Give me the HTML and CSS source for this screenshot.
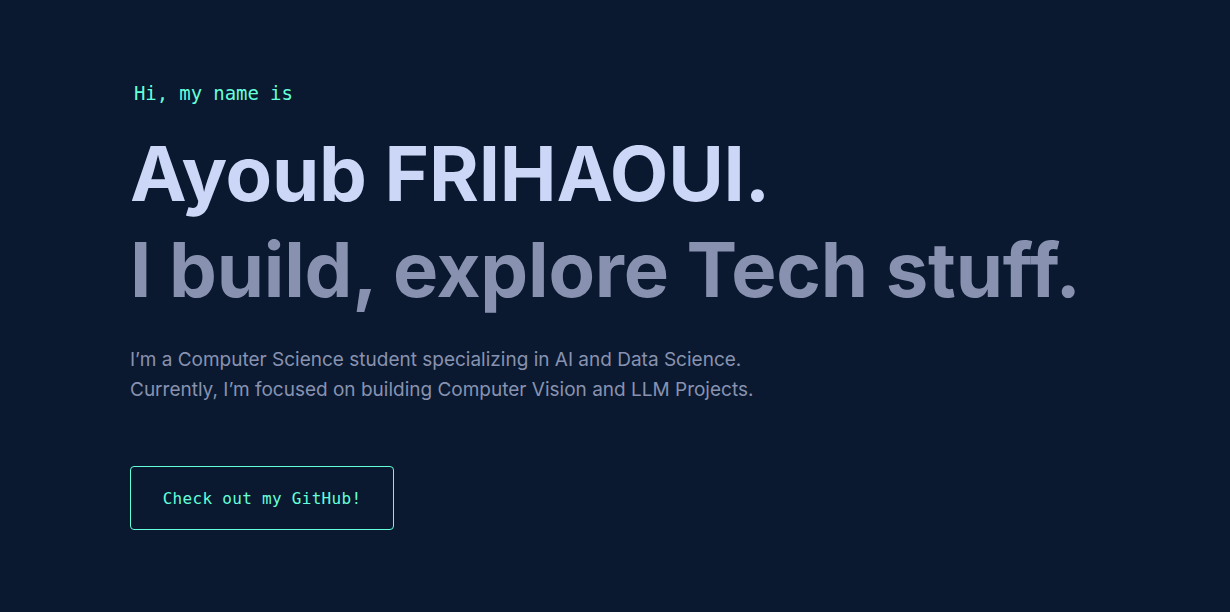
FILE: index.html
```html
<!DOCTYPE html>
<html lang="en">
<head>
<meta charset="utf-8">
<title>Ayoub FRIHAOUI</title>
<link rel="stylesheet" href="styles.css">
</head>
<body>
<main class="hero">
  <h1 class="intro">Hi, my name is</h1>
  <h2 class="big-heading name">Ayoub FRIHAOUI.</h2>
  <h3 class="big-heading tagline">I build, explore Tech stuff.</h3>
  <p class="about">I’m a Computer Science student specializing in AI and Data Science.<br>Currently, I’m focused on building Computer Vision and LLM Projects.</p>
  <a class="cta" href="#">Check out my GitHub!</a>
</main>
</body>
</html>
```
FILE: styles.css
```css
html, body {
  margin: 0;
  padding: 0;
  background: #0a192f;
  height: 100%;
}
body {
  font-family: "Inter", "Liberation Sans", sans-serif;
  color: #8892b0;
}
.hero {
  display: flex;
  flex-direction: column;
  align-items: flex-start;
  padding: 83px 0 0 130px;
}
.intro {
  margin: 0 0 28px 4px;
  font-family: "DejaVu Sans Mono", monospace;
  font-weight: 400;
  font-size: 19px;
  letter-spacing: -0.1px;
  line-height: 1.1;
  color: #64ffda;
}
.big-heading {
  margin: 0;
  font-family: "Inter", "Liberation Sans", sans-serif;
  font-weight: 700;
  font-size: 76px;
  letter-spacing: -0.2px;
  line-height: 1.1;
}
.name {
  color: #ccd6f6;
}
.tagline {
  margin-top: 13px;
  color: #8892b0;
}
.about {
  margin: 33px 0 0;
  font-size: 19px;
  line-height: 30px;
  color: #8892b0;
}
.cta {
  margin-top: 61px;
  box-sizing: border-box;
  width: 264px;
  height: 64px;
  display: flex;
  align-items: center;
  justify-content: center;
  border: 1px solid #64ffda;
  border-radius: 4px;
  font-family: "DejaVu Sans Mono", monospace;
  font-size: 16px;
  letter-spacing: 0.3px;
  color: #64ffda;
  text-decoration: none;
}
```
